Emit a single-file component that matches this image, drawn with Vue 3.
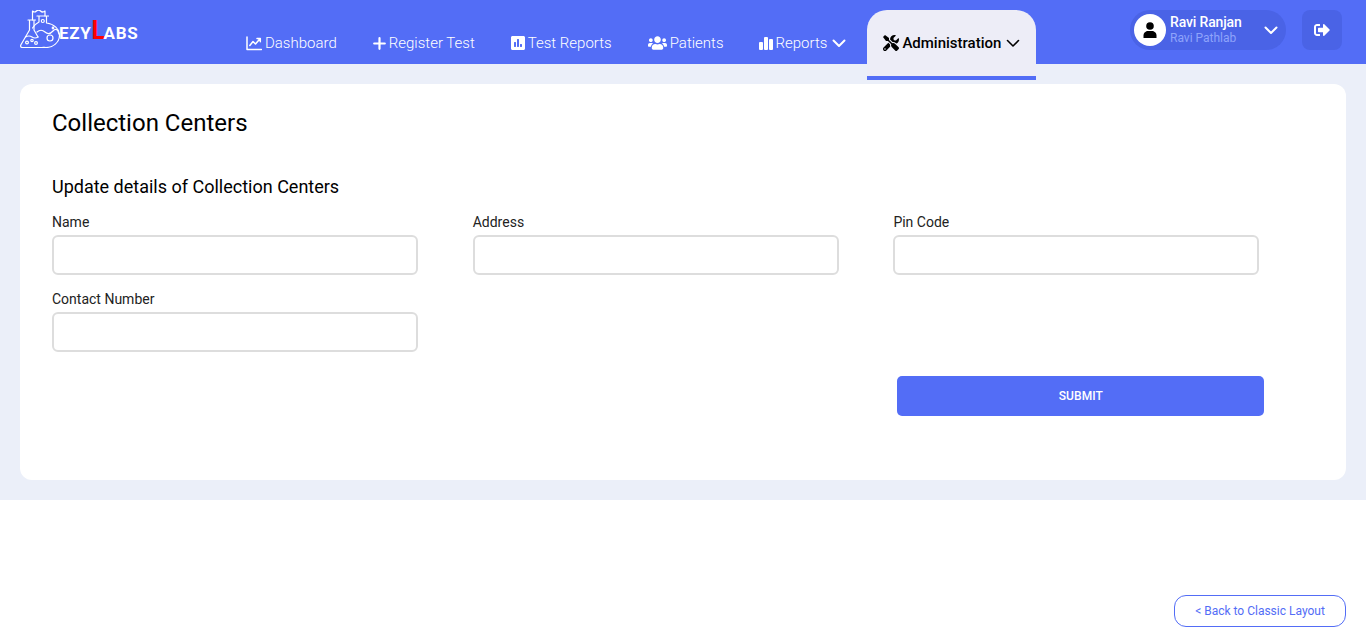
<script setup>
const fields = [
  { label: 'Name' },
  { label: 'Address' },
  { label: 'Pin Code' },
  { label: 'Contact Number' },
]
</script>

<template>
  <div class="page">
    <header class="topbar">
      <div class="logo">
        <svg class="flask" width="40" height="38" viewBox="0 0 40 38" fill="none" stroke="#fff" stroke-width="1.200" stroke-linejoin="round" stroke-linecap="round">
          <path d="M8 10H15.500M9.500 10V20L0.800 35Q0 37.500 2.500 37.500H22M14 10V20L18 27"/>
          <path d="M5.500 27Q9 25 12 27T18 27"/>
          <circle cx="7" cy="32.500" r="1.400"/><circle cx="12" cy="30.500" r="1.200"/><circle cx="16" cy="33" r="1.400"/>
          <path d="M12.500 10V1Q14.500 3 16.500 1T20.500 1T25 1V6"/>
          <path d="M17 6H28.500M19 6V12Q15 14 12.500 18M26.500 6V13C34 14 39.500 19 39.500 25.500C39.500 32.500 33 37.500 26 37.500C24.500 37.500 23 37.300 22 37.500"/>
          <path d="M17 22Q21 18.500 25 22T33 21T39 24"/>
          <circle cx="30" cy="28" r="3"/><circle cx="22.800" cy="11" r="1.500"/><circle cx="33" cy="18" r="0.800"/>
        </svg>
        <span class="brand">EZY<span class="brand-l">L</span>ABS</span>
      </div>

      <nav class="nav">
        <a class="nav-item">
          <svg class="ic" width="16" height="16" viewBox="0 0 16 16" fill="none" stroke="#fff" stroke-width="1.500" stroke-linecap="round" stroke-linejoin="round"><path d="M1 2V14.500H15.500"/><path d="M3.800 10.500L7 6.500L9.500 9L14 3.800M11 3.500H14.300V6.800"/></svg>
          <span>Dashboard</span>
        </a>
        <a class="nav-item">
          <svg class="ic" width="13" height="13" viewBox="0 0 13 13" stroke="#fff" stroke-width="2.200" stroke-linecap="round"><path d="M6.500 1.200v10.600M1.200 6.500h10.600"/></svg>
          <span>Register Test</span>
        </a>
        <a class="nav-item">
          <svg class="ic" width="14" height="16" viewBox="0 0 448 512" fill="#fff"><path d="M400 32H48C21.500 32 0 53.500 0 80v352c0 26.500 21.500 48 48 48h352c26.500 0 48-21.500 48-48V80c0-26.500-21.500-48-48-48zM160 368c0 8.840-7.160 16-16 16h-32c-8.840 0-16-7.160-16-16V240c0-8.840 7.160-16 16-16h32c8.840 0 16 7.160 16 16v128zm96 0c0 8.840-7.160 16-16 16h-32c-8.840 0-16-7.160-16-16V144c0-8.840 7.160-16 16-16h32c8.840 0 16 7.160 16 16v224zm96 0c0 8.840-7.160 16-16 16h-32c-8.840 0-16-7.160-16-16v-64c0-8.840 7.160-16 16-16h32c8.840 0 16 7.160 16 16v64z"/></svg>
          <span>Test Reports</span>
        </a>
        <a class="nav-item">
          <svg class="ic" width="19" height="16" viewBox="0 0 640 512" fill="#fff"><path d="M96 224c35.300 0 64-28.700 64-64s-28.700-64-64-64-64 28.700-64 64 28.700 64 64 64zm448 0c35.300 0 64-28.700 64-64s-28.700-64-64-64-64 28.700-64 64 28.700 64 64 64zm32 32h-64c-17.600 0-33.500 7.100-45.100 18.600 40.300 22.100 68.900 62 75.100 109.400h66c17.700 0 32-14.300 32-32v-32c0-35.300-28.700-64-64-64zm-256 0c61.900 0 112-50.100 112-112S381.900 32 320 32 208 82.100 208 144s50.100 112 112 112zm76.800 32h-8.300c-20.800 10-43.900 16-68.500 16s-47.600-6-68.500-16h-8.300C179.600 288 128 339.600 128 403.200V432c0 26.500 21.500 48 48 48h288c26.500 0 48-21.500 48-48v-28.800c0-63.600-51.600-115.200-115.200-115.200zm-223.700-13.400C161.500 263.100 145.600 256 128 256H64c-35.300 0-64 28.700-64 64v32c0 17.700 14.300 32 32 32h65.900c6.300-47.400 34.900-87.300 75.200-109.400z"/></svg>
          <span>Patients</span>
        </a>
        <a class="nav-item reports">
          <svg class="ic" width="14" height="14" viewBox="0 0 14 14" fill="#fff"><rect x="0" y="6" width="4" height="8" rx="1"/><rect x="5" y="1" width="4" height="13" rx="1"/><rect x="10" y="3" width="4" height="11" rx="1"/></svg>
          <span>Reports</span>
          <svg class="chev" width="14" height="9" viewBox="0 0 14 9" fill="none" stroke="#fff" stroke-width="2" stroke-linecap="round" stroke-linejoin="round"><path d="M1.500 1.500L7 7l5.500-5.500"/></svg>
        </a>
        <a class="nav-item active">
          <svg class="ic" width="16" height="16" viewBox="0 0 512 512" fill="#000"><path d="M501.100 395.700L384 278.600c-23.100-23.100-57.600-27.600-85.400-13.900L192 158.100V96L64 0 0 64l96 128h62.100l106.600 106.600c-13.600 27.800-9.200 62.300 13.900 85.400l117.100 117.100c14.600 14.600 38.200 14.600 52.700 0l52.700-52.700c14.500-14.600 14.500-38.200 0-52.700zM331.700 225c28.300 0 54.900 11 74.900 31l19.400 19.400c15.800-6.900 30.800-16.500 43.800-29.500 37.100-37.100 49.700-89.300 37.900-136.700-2.200-9-13.500-12.100-20.100-5.500l-74.400 74.400-67.900-11.300L334 98.900l74.400-74.400c6.600-6.600 3.400-17.900-5.700-20.200-47.400-11.700-99.600.9-136.600 37.900-28.500 28.500-41.900 66.100-41.200 103.600l82.100 82.100c8.100-1.900 16.500-2.900 24.700-2.900zm-103.900 82l-56.700-56.700L18.700 402.800c-25 25-25 65.500 0 90.500s65.500 25 90.500 0l123.600-123.600c-7.600-19.900-9.900-41.600-5-62.700zM64 472c-13.200 0-24-10.800-24-24 0-13.300 10.700-24 24-24s24 10.700 24 24c0 13.200-10.700 24-24 24z"/></svg>
          <span>Administration</span>
          <svg class="chev" width="14" height="9" viewBox="0 0 14 9" fill="none" stroke="#000" stroke-width="1.600" stroke-linecap="round" stroke-linejoin="round"><path d="M1.500 1.500L7 7l5.500-5.500"/></svg>
        </a>
      </nav>

      <div class="account">
        <div class="user-pill">
          <div class="avatar">
            <svg width="14" height="16" viewBox="0 0 14 16" fill="#000"><circle cx="7" cy="4" r="3.800"/><path d="M0.500 16v-2.500C0.500 10.500 3 9 5 9h4c2 0 4.500 1.500 4.500 4.500V16z"/></svg>
          </div>
          <div class="user-text">
            <div class="user-name">Ravi Ranjan</div>
            <div class="user-lab">Ravi Pathlab</div>
          </div>
          <svg class="user-chev" width="14" height="9" viewBox="0 0 14 9" fill="none" stroke="#fff" stroke-width="2" stroke-linecap="round" stroke-linejoin="round"><path d="M1.500 1.500L7 7l5.500-5.500"/></svg>
        </div>
        <button class="logout" type="button" aria-label="Log out">
          <svg width="16" height="16" viewBox="0 0 512 512" fill="#fff"><path d="M497 273L329 441c-15 15-41 4.500-41-17v-96H152c-13.300 0-24-10.700-24-24v-96c0-13.300 10.700-24 24-24h136V88c0-21.400 25.900-32 41-17l168 168c9.300 9.400 9.300 24.600 0 34zM192 436v-40c0-6.600-5.400-12-12-12H96c-17.700 0-32-14.300-32-32V160c0-17.700 14.300-32 32-32h84c6.600 0 12-5.400 12-12V76c0-6.600-5.400-12-12-12H96c-53 0-96 43-96 96v192c0 53 43 96 96 96h84c6.600 0 12-5.400 12-12z"/></svg>
        </button>
      </div>
    </header>

    <main class="content">
      <section class="card">
        <h1 class="title">Collection Centers</h1>
        <h2 class="subtitle">Update details of Collection Centers</h2>
        <form class="form" @submit.prevent>
          <div v-for="f in fields" :key="f.label" class="field">
            <label class="label">{{ f.label }}</label>
            <input class="input" type="text" />
          </div>
          <div class="actions">
            <button class="submit" type="submit">SUBMIT</button>
          </div>
        </form>
      </section>
    </main>

    <a class="classic">&lt; Back to Classic Layout</a>
  </div>
</template>

<style>
html, body { margin: 0; background: #fff; }
</style>

<style scoped>
.page {
  position: relative;
  height: 634px;
  overflow: hidden;
  font-family: Roboto, "Liberation Sans", sans-serif;
  color: #000;
}
.topbar {
  position: relative;
  z-index: 2;
  display: flex;
  align-items: flex-start;
  height: 64px;
  background: #536DF6;
  padding: 0 24px 0 20px;
  box-sizing: border-box;
}
.logo {
  display: flex;
  align-items: flex-end;
  width: 210px;
  height: 48px;
  padding-top: 10px;
  box-sizing: border-box;
  flex: none;
}
.flask { flex: none; margin-right: -1px; }
.brand {
  font-weight: 700;
  font-size: 17px;
  line-height: 20px;
  letter-spacing: 0.700px;
  color: #fff;
  margin-bottom: 5px;
  white-space: nowrap;
}
.brand-l {
  color: #f00;
  font-size: 25px;
  line-height: 20px;
  font-weight: 700;
  letter-spacing: -1.500px;
  margin-right: 0;
}
.nav {
  display: flex;
  gap: 4px;
  margin-top: 10px;
  flex: none;
}
.nav-item {
  display: flex;
  align-items: center;
  gap: 3px;
  height: 66px;
  padding: 0 16px;
  color: #fff;
  font-size: 15px;
  font-weight: 300;
  white-space: nowrap;
}
.nav-item .ic { flex: none; }
.chev { margin-left: 2px; }
.reports { margin-left: -1px; padding-right: 17px; }
.active {
  color: #000;
  font-weight: 500;
  background: #EDEDF7;
  border-radius: 20px 20px 0 0;
  border-bottom: 4px solid #536DF6;
}
.account {
  margin-left: auto;
  display: flex;
  gap: 16px;
  margin-top: 10px;
}
.user-pill {
  display: flex;
  align-items: center;
  width: 156px;
  height: 40px;
  box-sizing: border-box;
  padding: 0 8px 0 4px;
  border-radius: 20px;
  background: #4A63E6;
}
.avatar {
  width: 32px;
  height: 32px;
  border-radius: 50%;
  background: #fff;
  display: flex;
  align-items: center;
  justify-content: center;
  flex: none;
}
.user-text { margin-left: 4px; flex: 1; }
.user-name {
  font-size: 14px;
  line-height: 16px;
  color: #fff;
  font-weight: 500;
  letter-spacing: -0.150px;
  margin-top: -1px;
}
.user-lab { font-size: 12px; line-height: 14px; margin-top: 1px; color: #8FA3FB; }
.logout {
  width: 40px;
  height: 40px;
  border: 0;
  padding: 0;
  border-radius: 8px;
  background: #4A63E6;
  display: flex;
  align-items: center;
  justify-content: center;
}
.content {
  background: #EBEFF9;
  padding: 20px;
}
.card {
  background: #fff;
  border-radius: 12px;
  height: 396px;
  box-sizing: border-box;
  padding: 24px 32px 0;
}
.title {
  margin: 0;
  font-size: 24px;
  font-weight: 400;
  line-height: 30px;
}
.subtitle {
  margin: 37px 0 0;
  font-size: 18px;
  font-weight: 400;
  line-height: 24px;
}
.form {
  display: grid;
  grid-template-columns: repeat(3, 366px);
  column-gap: 54.700px;
  row-gap: 16px;
  margin-top: 15px;
}
.field { display: flex; flex-direction: column; }
.label {
  font-size: 14px;
  line-height: 16px;
  margin-bottom: 5px;
  color: #222;
}
.input {
  height: 40px;
  box-sizing: border-box;
  border: 2px solid #DDD;
  border-radius: 6px;
  background: #fff;
  outline: 0;
}
.actions {
  grid-column: 1 / -1;
  display: flex;
  justify-content: flex-end;
  margin-top: 8px;
}
.submit {
  width: 367px;
  height: 40px;
  margin-right: -5px;
  border: 0;
  border-radius: 5px;
  background: #536DF6;
  color: #fff;
  font-family: inherit;
  font-size: 12px;
  font-weight: 500;
  letter-spacing: 0.100px;
}
.classic {
  position: absolute;
  left: 1174px;
  top: 595px;
  width: 172px;
  height: 32px;
  box-sizing: border-box;
  border: 1px solid #536DF6;
  border-radius: 12px;
  color: #536DF6;
  font-size: 12px;
  display: flex;
  align-items: center;
  justify-content: center;
  background: #fff;
}
</style>
